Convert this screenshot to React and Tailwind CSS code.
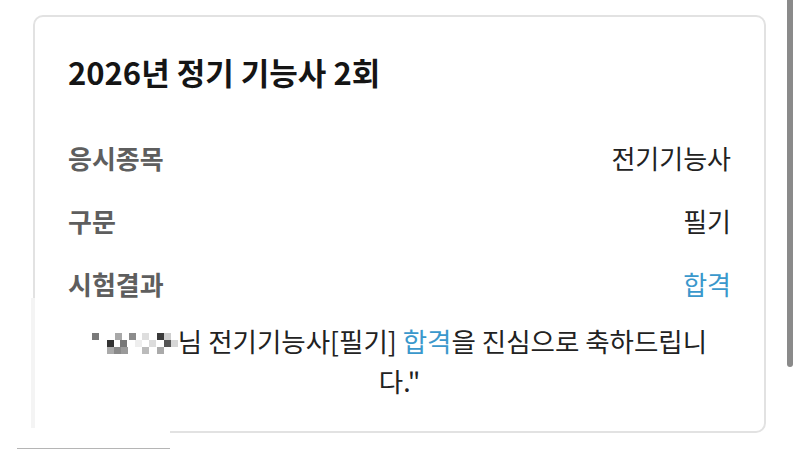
import React from 'react';

const cells = [
  [0, 0, '#7a7a7a'], [23, 0, '#a8a8a8'], [37, 0, '#8c8c8c'], [50, 0, '#dedede'], [65, 0, '#3a3a3a'], [72, 0, '#cfcfcf'],
  [15, 7, '#333333'], [28, 7, '#777777'], [43, 7, '#eeeeee'], [57, 7, '#dcdcdc'], [72, 7, '#555555'], [79, 7, '#d6d6d6'],
  [15, 14, '#aaaaaa'], [22, 14, '#8a8a8a'], [29, 14, '#9a9a9a'], [50, 14, '#bbbbbb'], [65, 14, '#aaaaaa'],
];

const Mosaic = () => (
  <svg width="86" height="21" viewBox="0 0 86 21" className="inline-block align-[-2px]">
    {cells.map(([x, y, c], i) => (
      <rect key={i} x={x} y={y} width="7" height="7" fill={c} />
    ))}
  </svg>
);

const rows = [
  { label: '응시종목', value: '전기기능사' },
  { label: '구문', value: '필기' },
  { label: '시험결과', value: '합격', blue: true },
];

export default function App() {
  return (
    <div
      className="relative w-[800px] h-[450px] overflow-hidden bg-white"
      style={{ fontFamily: '"Noto Sans CJK KR", "Noto Sans", sans-serif' }}
    >
      {/* Card */}
      <div className="ml-[33px] mt-[15px] w-[733px] h-[418px] border-2 border-[#e2e2e2] rounded-[10px] px-[33px] pt-[35px]">
        <h1 className="text-[31px] leading-[40px] font-bold text-[#151515]">2026년 정기 기능사 2회</h1>

        <div className="mt-[34px]">
          {rows.map(r => (
            <div key={r.label} className="h-[63px] flex items-center justify-between text-[26px]">
              <span className="font-semibold text-[#5e5e5e]">{r.label}</span>
              <span className={r.blue ? 'text-[#3a98cc]' : 'text-[#222]'}>{r.value}</span>
            </div>
          ))}
        </div>

        {/* message */}
        <p className="relative z-10 mt-[6px] text-center text-[26.5px] leading-[40px] text-[#222]">
          <Mosaic />님 전기기능사[필기] <span className="text-[#3a98cc]">합격</span>을 진심으로 축하드립니
          <br />
          다."
        </p>
      </div>

      {/* pasted white patch over the bottom-left */}
      <div className="absolute left-[30px] top-[298px] w-[140px] h-[150px] bg-white">
        <div className="ml-[1px] w-[4px] h-[130px] bg-[#f4f4f4]"></div>
      </div>
      <div className="absolute left-[17px] top-[448px] w-[153px] h-[1px] bg-[#b5b5b5]"></div>

      {/* scrollbar thumb */}
      <div className="absolute left-[787px] top-0 w-[6px] h-[367px] bg-[#8a8a8a] rounded-b-[3px]"></div>
    </div>
  );
}
